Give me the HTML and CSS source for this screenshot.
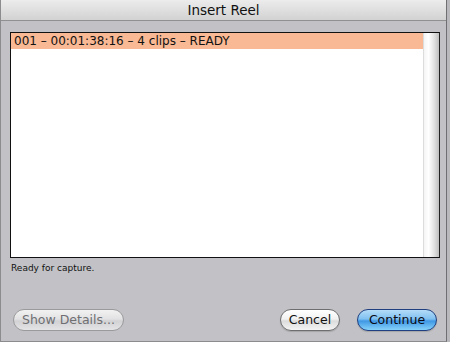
FILE: index.html
```html
<!DOCTYPE html>
<html>
<head>
<meta charset="utf-8">
<link rel="stylesheet" href="styles.css">
</head>
<body>
<div class="window">
  <div class="titlebar">Insert Reel</div>
  <div class="content">
    <div class="list">
      <div class="rows">
        <div class="row selected">001 – 00:01:38:16 – 4 clips – READY</div>
      </div>
      <div class="scrolltrack"></div>
    </div>
    <div class="status">Ready for capture.</div>
    <div class="buttons">
      <button class="btn disabled">Show Details...</button>
      <div class="spacer"></div>
      <button class="btn cancel">Cancel</button>
      <button class="btn default">Continue</button>
    </div>
  </div>
</div>
</body>
</html>
```
FILE: styles.css
```css
html, body {
  margin: 0;
  padding: 0;
  background: #b9b9bd;
}
body {
  width: 450px;
  height: 342px;
  overflow: hidden;
  font-family: "DejaVu Sans", Verdana, sans-serif;
}
.window {
  box-sizing: border-box;
  width: 447px;
  height: 342px;
  background: #c2c2c6;
  border-left: 1px solid #8c8c8e;
  border-right: 1px solid #6f6f72;
  border-bottom: 1px solid #8c8c8e;
  display: flex;
  flex-direction: column;
}
.titlebar {
  height: 21px;
  box-sizing: border-box;
  border-bottom: 1px solid #909092;
  background: linear-gradient(#ececec, #d2d2d2);
  text-align: center;
  font-size: 13.5px;
  line-height: 21px;
  color: #111;
}
.content {
  flex: 1;
  display: flex;
  flex-direction: column;
  padding: 11px 9px 0 9px;
}
.list {
  width: 430px;
  height: 226px;
  box-sizing: border-box;
  border: 1px solid #111;
  border-right-color: #222;
  background: #fff;
  display: flex;
}
.rows {
  flex: 1;
}
.row {
  height: 16px;
  font-size: 12px;
  line-height: 16px;
  padding-left: 3px;
  color: #111;
  white-space: nowrap;
}
.row.selected {
  background: #f9b994;
}
.scrolltrack {
  width: 15px;
  background: linear-gradient(90deg, #f4f4f4 0%, #ffffff 30%, #e4e4e4 65%, #bfbfbf 100%);
  border-left: 1px solid #dcdcdc;
}
.status {
  font-size: 9px;
  margin-top: 5px;
  padding-left: 1px;
  color: #111;
}
.buttons {
  margin-top: auto;
  margin-bottom: 10px;
  display: flex;
  align-items: center;
}
.spacer {
  flex: 1;
}
.btn {
  font-family: "DejaVu Sans", Verdana, sans-serif;
  font-size: 12.5px;
  height: 22px;
  box-sizing: border-box;
  border-radius: 11px;
  border: 1px solid #6e6e70;
  background: linear-gradient(#ffffff 0%, #f2f2f2 45%, #dcdcdc 55%, #f4f4f4 100%);
  color: #111;
  padding: 0;
  margin: 0;
  line-height: 20px;
  white-space: nowrap;
  box-shadow: 0 1px 1px rgba(0,0,0,0.15);
}
.btn.disabled {
  margin-left: 3px;
  width: 111px;
  color: #6f6f72;
  border-color: #9a9a9c;
  background: linear-gradient(#f2f2f2 0%, #e2e2e4 45%, #d2d2d4 55%, #e4e4e6 100%);
  box-shadow: none;
}
.btn.cancel {
  width: 60px;
}
.btn.default {
  margin-left: 17px;
  width: 80px;
  border-color: #1f3f80;
  color: #0a0a14;
  background: linear-gradient(#b4dcf8 0%, #7fc0f0 45%, #3f98e4 55%, #86d2fa 100%);
}
```
